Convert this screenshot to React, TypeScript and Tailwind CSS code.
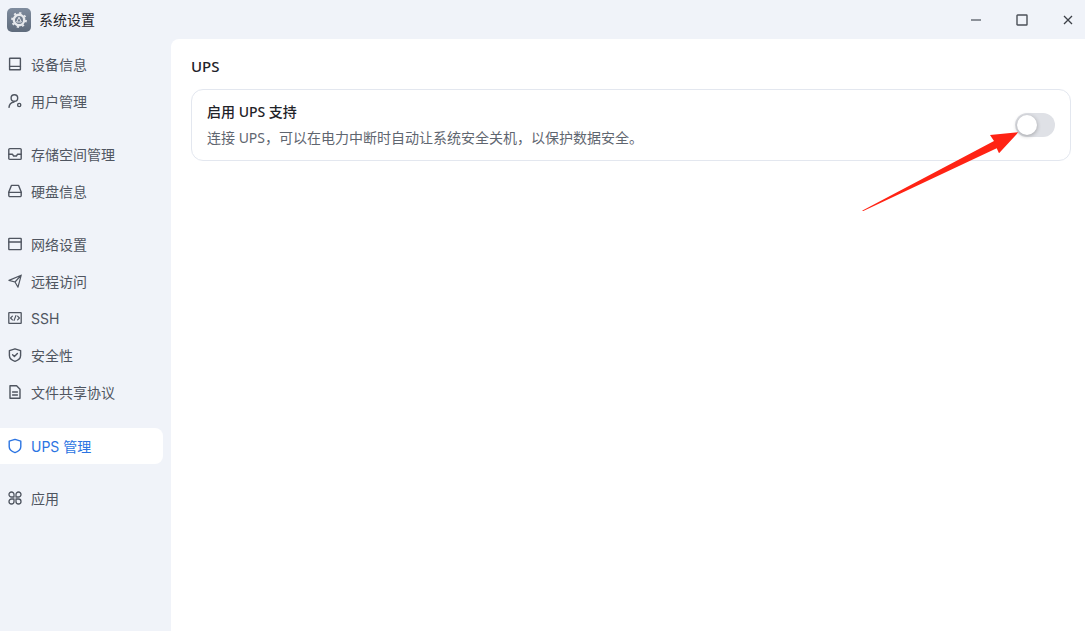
import React from "react";

const S = { fill: "none", stroke: "currentColor", strokeWidth: 1.4, strokeLinecap: "round" as const, strokeLinejoin: "round" as const };

const icons: Record<string, React.ReactNode> = {
  device: <><rect x="2.6" y="2.2" width="10.8" height="11.6" rx="0.4" {...S} strokeLinejoin="miter" /><path d="M2.6 10.4h10.8" {...S} /></>,
  user: <><circle cx="7.4" cy="5" r="3.3" {...S} /><path d="M2 14.4c.2-2.8 2.2-5 5-5.4" {...S} /><circle cx="12.2" cy="12" r="1.6" {...S} /></>,
  storage: <><rect x="1.8" y="2.6" width="12.4" height="10.8" rx="1" {...S} /><path d="M2 8.2h3.4l1.2 1.8h2.8l1.2-1.8H14" {...S} /></>,
  disk: <><path d="M4.4 2.4h7.2l2.6 6.6v3.4a1.2 1.2 0 0 1-1.2 1.2H3a1.2 1.2 0 0 1-1.2-1.2V9z" {...S} /><path d="M1.8 9.4h12.4" {...S} /></>,
  network: <><rect x="1.8" y="2.4" width="12.4" height="11.2" rx="0.6" {...S} /><path d="M1.8 6h12.4" {...S} /></>,
  remote: <path d="M14.2 2.2 2 7.4l6 1.6 3 5.2zM14.2 2.2 8 9" {...S} strokeWidth={1.2} />,
  ssh: <><rect x="1.8" y="2.6" width="12.4" height="10.8" rx="0.4" {...S} strokeWidth={1.3} /><path d="M5.4 6.2 3.6 8l1.8 1.8M10.6 6.2 12.4 8l-1.8 1.8M8.9 5.6 7.1 10.4" {...S} strokeWidth={1.2} /></>,
  security: <><path d="M8 1.8 13.6 3.6v5c0 2.8-2.4 4.8-5.6 5.8-3.2-1-5.6-3-5.6-5.8v-5z" {...S} /><path d="M5.6 7.8 7.4 9.6l3-3" {...S} /></>,
  file: <><path d="M3 1.8h6.6L13 5.2v9H3z" {...S} /><path d="M5.6 8h4.8M5.6 11h4.8" {...S} /></>,
  ups: <path d="M8 1.4 13.8 3.2v5.6c0 2.7-2.5 4.7-5.8 5.8-3.3-1.1-5.8-3.1-5.8-5.8V3.2z" {...S} />,
  apps: <path d="M7 7H4.5A2.5 2.5 0 1 1 7 4.5zM9 7h2.5A2.5 2.5 0 1 0 9 4.5zM7 9H4.5A2.5 2.5 0 1 0 7 11.5zM9 9h2.5A2.5 2.5 0 1 1 9 11.5z" {...S} strokeWidth={1.3} />,
};

const groups = [
  [["device", "设备信息"], ["user", "用户管理"]],
  [["storage", "存储空间管理"], ["disk", "硬盘信息"]],
  [["network", "网络设置"], ["remote", "远程访问"], ["ssh", "SSH"], ["security", "安全性"], ["file", "文件共享协议"]],
  [["ups", "UPS 管理"]],
  [["apps", "应用"]],
];

function Item({ icon, label }: { icon: string; label: string }) {
  const active = icon === "ups";
  return (
    <div className={`h-9 flex items-center gap-2 pl-[7px] rounded-r-lg text-[14px] font-['Inter','Noto_Sans_CJK_SC',sans-serif] ${active ? "bg-white text-[#2b74e2]" : "text-[#4f5560]"}`}>
      <svg width="16" height="16" viewBox="0 0 16 16" className="shrink-0">{icons[icon]}</svg>
      <span>{label}</span>
    </div>
  );
}

export default function App() {
  return (
    <div className="relative w-[1085px] h-[631px] overflow-hidden bg-[#f0f3f9] flex flex-col font-['Noto_Sans','Noto_Sans_CJK_SC',sans-serif]">
      <header className="h-[39px] shrink-0 flex items-center pl-[7px]">
        <div className="w-6 h-6 rounded-[5px] bg-gradient-to-b from-[#7f8c9e] to-[#5f6b7c] flex items-center justify-center">
          <svg width="18" height="18" viewBox="0 0 18 18">
            <circle cx="9" cy="9" r="5.2" fill="none" stroke="#e6e8ec" strokeWidth="2.4" />
            <circle cx="9" cy="9" r="7" fill="none" stroke="#e6e8ec" strokeWidth="1.8" strokeDasharray="2.2 3.3" />
            <path d="M9 6.2 11.4 11H6.6z" fill="none" stroke="#e6e8ec" strokeWidth="1" />
          </svg>
        </div>
        <span className="ml-2 text-[14px] text-[#1f2329]">系统设置</span>
        <div className="ml-auto flex items-center gap-[34px] pr-[11px] text-[#4b5058]">
          <svg width="12" height="12" viewBox="0 0 12 12"><path d="M1 6h10" stroke="#6b7078" strokeWidth="1.5" /></svg>
          <svg width="12" height="12" viewBox="0 0 12 12"><rect x="1" y="1" width="10" height="10" rx="0.6" fill="none" stroke="#4b5058" strokeWidth="1.4" /></svg>
          <svg width="12" height="12" viewBox="0 0 12 12"><path d="M2 2l8 8M10 2l-8 8" stroke="#3c4047" strokeWidth="1.3" /></svg>
        </div>
      </header>
      <div className="flex flex-1 min-h-0">
        <nav className="w-[171px] shrink-0 pt-[7px] pr-2 flex flex-col gap-[17px]">
          {groups.map((g, i) => (
            <div key={i} className={`flex flex-col gap-px ${i === 3 ? "mt-px -mb-px" : ""}`}>
              {g.map(([icon, label]) => <Item key={icon} icon={icon} label={label} />)}
            </div>
          ))}
        </nav>
        <main className="flex-1 bg-white rounded-tl-lg pl-5 pr-[14px] pt-4">
          <h1 className="text-[15px] leading-[22px] font-medium text-[#1f2329]">UPS</h1>
          <section className="mt-3 h-[72px] border border-[#e3e7ef] rounded-xl flex items-center justify-between pl-[15px] pr-[15px]">
            <div>
              <div className="text-[14px] leading-5 font-medium text-[#1f2329]">启用 UPS 支持</div>
              <div className="mt-[6px] text-[14px] leading-5 text-[#5f6670]">连接 UPS，可以在电力中断时自动让系统安全关机，以保护数据安全。</div>
            </div>
            <div className="w-10 h-6 rounded-full bg-[#dfe1e6] p-[2px]">
              <div className="w-5 h-5 rounded-full bg-white shadow-[0_1px_4px_rgba(0,0,0,0.3)]" />
            </div>
          </section>
        </main>
      </div>
      <svg className="absolute left-[860px] top-[130px] pointer-events-none" width="160" height="85" viewBox="860 130 160 85">
        <path d="M862 210.7 L994 141 L990 135 L1018.3 132.3 L999 153.3 L996.7 148.3 L863.3 211 Z" fill="#ff2314" />
      </svg>
    </div>
  );
}
